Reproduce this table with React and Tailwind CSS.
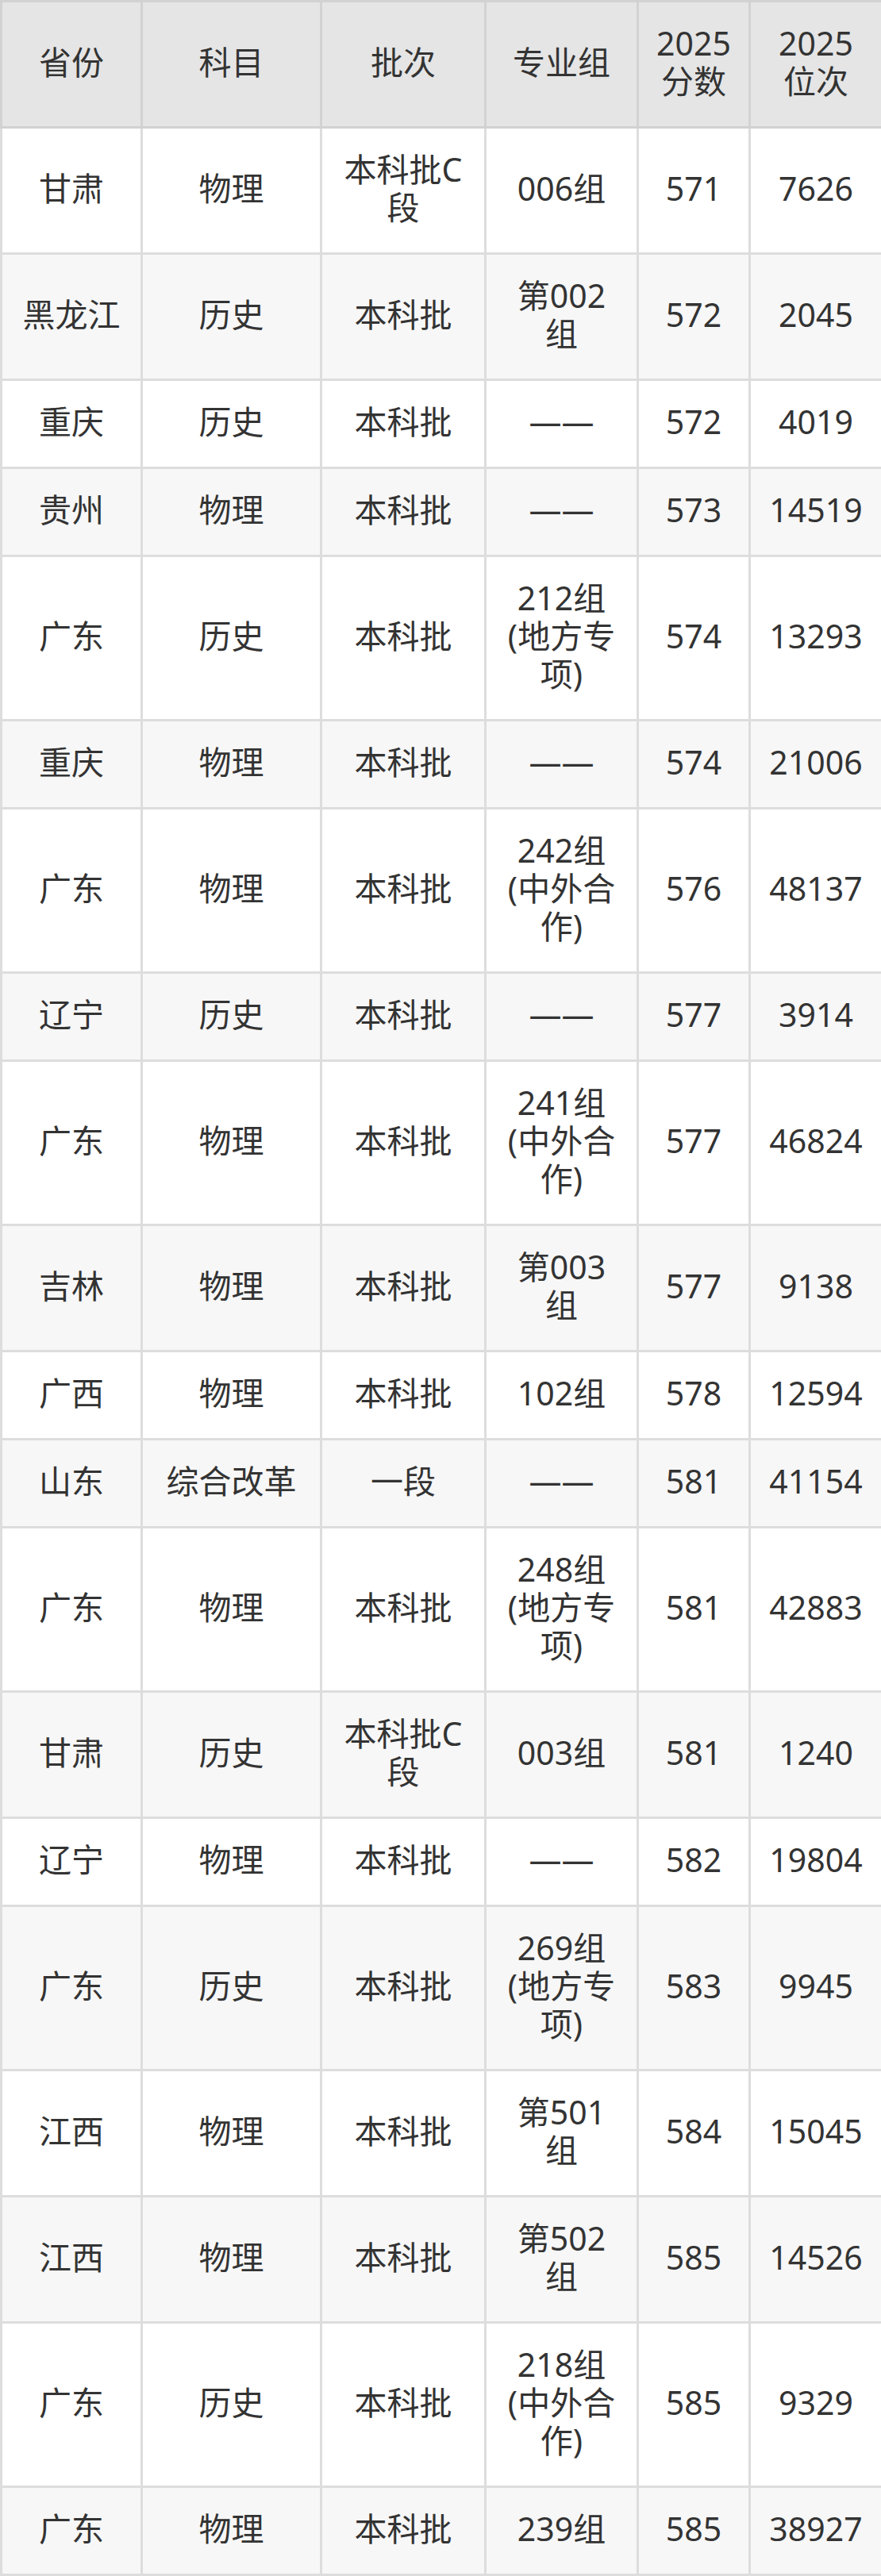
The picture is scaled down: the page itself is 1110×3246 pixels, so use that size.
const headers = ['省份', '科目', '批次', '专业组', '2025\n分数', '2025\n位次']

// 换行按截图位置写死，避免字体宽度差异导致折行不同
const rows = [
  ['甘肃', '物理', '本科批C\n段', '006组', '571', '7626'],
  ['黑龙江', '历史', '本科批', '第002\n组', '572', '2045'],
  ['重庆', '历史', '本科批', '——', '572', '4019'],
  ['贵州', '物理', '本科批', '——', '573', '14519'],
  ['广东', '历史', '本科批', '212组\n(地方专\n项)', '574', '13293'],
  ['重庆', '物理', '本科批', '——', '574', '21006'],
  ['广东', '物理', '本科批', '242组\n(中外合\n作)', '576', '48137'],
  ['辽宁', '历史', '本科批', '——', '577', '3914'],
  ['广东', '物理', '本科批', '241组\n(中外合\n作)', '577', '46824'],
  ['吉林', '物理', '本科批', '第003\n组', '577', '9138'],
  ['广西', '物理', '本科批', '102组', '578', '12594'],
  ['山东', '综合改革', '一段', '——', '581', '41154'],
  ['广东', '物理', '本科批', '248组\n(地方专\n项)', '581', '42883'],
  ['甘肃', '历史', '本科批C\n段', '003组', '581', '1240'],
  ['辽宁', '物理', '本科批', '——', '582', '19804'],
  ['广东', '历史', '本科批', '269组\n(地方专\n项)', '583', '9945'],
  ['江西', '物理', '本科批', '第501\n组', '584', '15045'],
  ['江西', '物理', '本科批', '第502\n组', '585', '14526'],
  ['广东', '历史', '本科批', '218组\n(中外合\n作)', '585', '9329'],
  ['广东', '物理', '本科批', '239组', '585', '38927'],
]

export default function App() {
  return (
    <div className="w-[1110px] bg-white font-['Noto_Sans','Noto_Sans_CJK_SC',sans-serif] text-[#333333]">
      <table className="w-[1110px] table-fixed border-collapse text-center text-[41px] leading-[48px]">
        <colgroup>
          <col className="w-[177px]" />
          <col className="w-[226px]" />
          <col className="w-[207px]" />
          <col className="w-[192px]" />
          <col className="w-[141px]" />
          <col className="w-[167px]" />
        </colgroup>
        <thead>
          <tr className="bg-[#e5e5e5]">
            {headers.map((h) => (
              <th
                key={h}
                className="border-[3px] border-[#d2d2d2] px-1 pt-[27px] pb-[33px] font-normal whitespace-pre-line align-middle"
              >
                {h}
              </th>
            ))}
          </tr>
        </thead>
        <tbody>
          {rows.map((row, i) => (
            <tr key={i} className={i % 2 === 0 ? 'bg-white' : 'bg-[#f7f7f7]'}>
              {row.map((cell, j) => (
                <td
                  key={j}
                  className="border-[3px] border-[#dddddd] px-1 pt-[27px] pb-[33px] whitespace-pre-line align-middle"
                >
                  {cell}
                </td>
              ))}
            </tr>
          ))}
        </tbody>
      </table>
    </div>
  )
}
